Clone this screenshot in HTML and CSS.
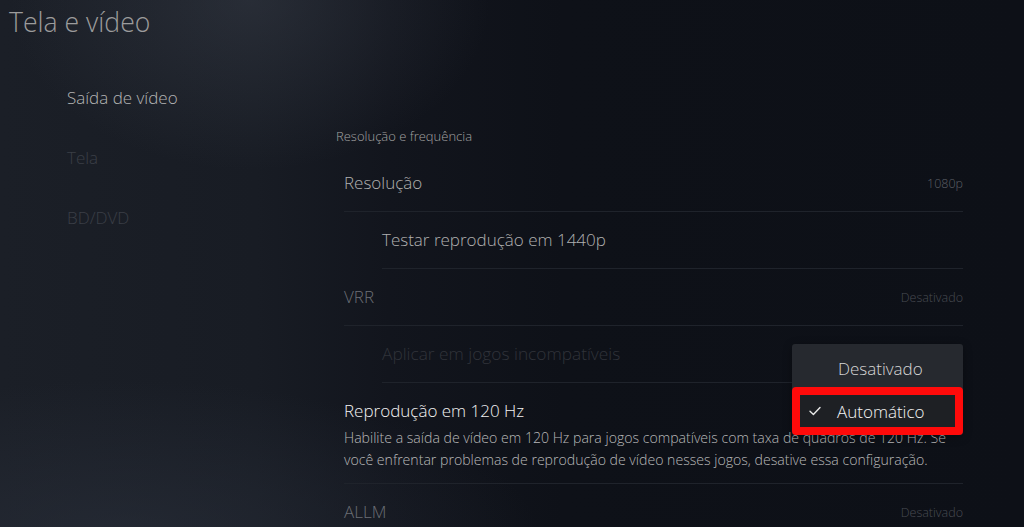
FILE: index.html
```html
<!DOCTYPE html>
<html lang="pt-BR">
<head>
<meta charset="utf-8">
<title>Tela e vídeo</title>
<link rel="stylesheet" href="styles.css">
</head>
<body>
<div class="page">
  <h1 class="title">Tela e vídeo</h1>
  <div class="main">
    <nav class="sidebar">
      <div class="nav-item active">Saída de vídeo</div>
      <div class="nav-item">Tela</div>
      <div class="nav-item">BD/DVD</div>
    </nav>
    <section class="content">
      <div class="section-head">Resolução e frequência</div>
      <div class="row">
        <span class="label">Resolução</span>
        <span class="value">1080p</span>
      </div>
      <div class="row sub">
        <span class="label">Testar reprodução em 1440p</span>
      </div>
      <div class="row dim">
        <span class="label">VRR</span>
        <span class="value">Desativado</span>
      </div>
      <div class="row sub disabled">
        <span class="label">Aplicar em jogos incompatíveis</span>
      </div>
      <div class="row focus">
        <div class="label">Reprodução em 120 Hz</div>
        <p class="desc">Habilite a saída de vídeo em 120 Hz para jogos compatíveis com taxa de quadros de 120 Hz. Se você enfrentar problemas de reprodução de vídeo nesses jogos, desative essa configuração.</p>
      </div>
      <div class="row dim last">
        <span class="label">ALLM</span>
        <span class="value">Desativado</span>
      </div>
      <div class="menu">
        <div class="menu-item first">Desativado</div>
        <div class="menu-item selected">
          <svg class="check" viewBox="0 0 12 10" width="12" height="10"><path d="M1 5.2 L4.4 8.4 L11 1.4" fill="none" stroke="#e8e8e8" stroke-width="1.4" stroke-linecap="round" stroke-linejoin="round"/></svg>
          <span>Automático</span>
        </div>
      </div>
    </section>
  </div>
</div>
</body>
</html>
```

FILE: styles.css
```css
html, body {
  margin: 0;
  padding: 0;
  height: 100%;
}
body {
  width: 1024px;
  height: 527px;
  overflow: hidden;
  font-family: "Open Sans", "Noto Sans", sans-serif;
  background:
    radial-gradient(ellipse 240px 170px at 250px 0px, rgba(70, 76, 88, 0.35), rgba(70, 76, 88, 0) 100%),
    radial-gradient(ellipse 420px 160px at 120px 540px, rgba(44, 50, 62, 0.55), rgba(44, 50, 62, 0) 100%),
    linear-gradient(90deg, #1b1f27 0%, #181c24 25%, #12151d 38%, #0e1118 55%, #0d1017 100%);
  color: #b5b5b5;
}
.page {
  position: relative;
  height: 527px;
}
.title {
  margin: 0;
  padding: 4px 0 0 9px;
  font-size: 26.6px;
  font-weight: 300;
  line-height: 36px;
  color: #9c9c9c;
}
.main {
  display: flex;
}
.sidebar {
  width: 336px;
  padding: 46px 0 0 67px;
  box-sizing: border-box;
  display: flex;
  flex-direction: column;
  gap: 36px;
}
.nav-item {
  font-size: 17px;
  line-height: 24px;
  font-weight: 300;
  color: #3a3e46;
}
.nav-item.active {
  color: #b4b4b4;
}
.content {
  width: 627px;
  padding-top: 87px;
  position: relative;
}
.section-head {
  font-size: 13px;
  line-height: 18px;
  color: #a2a2a2;
  font-weight: 300;
  height: 28px;
}
.row {
  margin-left: 8px;
  height: 56px;
  border-bottom: 1px solid #1f232b;
  display: flex;
  align-items: center;
  justify-content: space-between;
}
.row.sub {
  margin-left: 46px;
}
.label {
  font-size: 17px;
  line-height: 24px;
  font-weight: 300;
  color: #b0b0b0;
}
.value {
  font-size: 12.5px;
  font-weight: 300;
  color: #5c5f66;
}
.row.dim .label {
  color: #6b6e75;
}
.row.dim .value {
  color: #484b52;
}
.row.disabled .label {
  color: #30333a;
  font-size: 17.3px;
}
.row.focus {
  height: auto;
  display: block;
  padding: 16px 0 12px;
}
.row.focus .label {
  color: #f2f2f2;
  font-weight: 300;
}
.desc {
  margin: 4px 0 0;
  font-size: 14.1px;
  line-height: 22px;
  color: #b8b8b8;
  font-weight: 300;
}
.row.last {
  border-bottom: none;
}
.menu {
  position: absolute;
  left: 456px;
  top: 304px;
  width: 171px;
  background: #26292f;
  border-radius: 3px;
  box-shadow: 0 2px 10px rgba(0, 0, 0, 0.3);
}
.menu-item {
  display: flex;
  align-items: center;
  padding-left: 46px;
  font-size: 17px;
  font-weight: 300;
  color: #d6d6d6;
}
.menu-item.first {
  box-sizing: border-box;
  height: 43px;
  padding-top: 6px;
}
.menu-item.selected {
  height: 32px;
  border: 8px solid #ff0a0a;
  border-radius: 4px;
  background: #1e2024;
  padding-left: 9px;
  color: #f4f4f4;
  gap: 16px;
}
.check {
  display: block;
}
```
